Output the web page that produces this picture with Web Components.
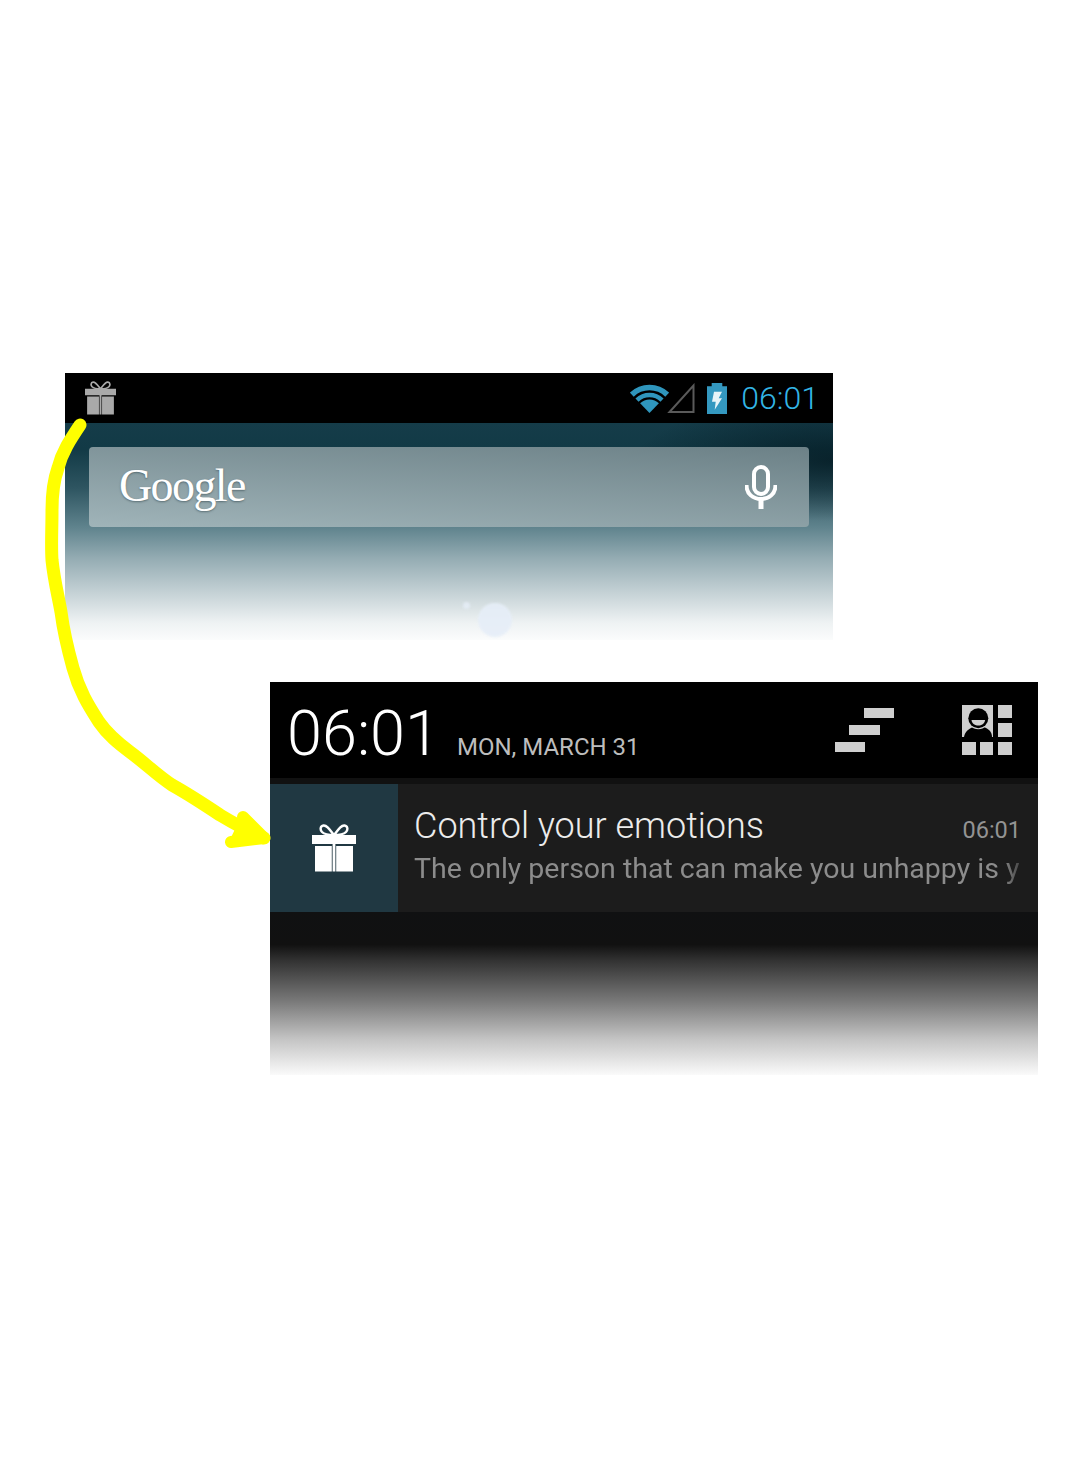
<!DOCTYPE html>
<html>
<head>
<meta charset="utf-8">
<title>Notification</title>
<style>
  html, body { margin: 0; background: #fff; }
  body { position: relative; width: 1080px; height: 1466px; overflow: hidden; font-family: Roboto, "Liberation Sans", sans-serif; }
</style>
</head>
<body>
<home-screen>
  <status-bar slot="bar" time="06:01"></status-bar>
  <search-box></search-box>
</home-screen>

<notification-shade time="06:01" date="MON, MARCH 31">
  <notification-row title="Control your emotions" time="06:01" text="The only person that can make you unhappy is y"></notification-row>
</notification-shade>

<hand-arrow></hand-arrow>

<script>
class GiftIcon extends HTMLElement {
  constructor () {
    super()
    this.shadow = this.attachShadow({ mode: 'open' })
  }

  connectedCallback () {
    const color = this.getAttribute('color') || '#fff'
    const width = this.getAttribute('width') || '44'
    const height = this.getAttribute('height') || '48'
    this.shadow.innerHTML = /* html */`
    <style>
      :host { display: block; line-height: 0; }
    </style>
    <svg width="${width}" height="${height}" viewBox="0 0 44 48">
      <path d="M0 11h44v9H0z M3 22h16.800v25.500H3z M24.200 22H41v25.500H24.200z M20.600 20h2.800v27.500h-2.800z" fill="${color}"/>
      <path d="M22 11C18 6 15 1 11.500 1.500 8 2 8 6 10 8 12 10 17 11 22 11Z M22 11C26 6 29 1 32.500 1.500 36 2 36 6 34 8 32 10 27 11 22 11Z" fill="none" stroke="${color}" stroke-width="2.400"/>
    </svg>
    `
  }
}

class StatusBar extends HTMLElement {
  constructor () {
    super()
    this.shadow = this.attachShadow({ mode: 'open' })
  }

  connectedCallback () {
    const time = this.getAttribute('time')
    this.shadow.innerHTML = /* html */`
    <style>
      :host {
        display: flex;
        align-items: center;
        height: 50px;
        background: #000;
        padding: 0 14px 0 20px;
      }
      .right { margin-left: auto; display: flex; align-items: center; }
      .right svg { display: block; }
      .signal { margin-left: -2px; }
      .battery { margin-left: 12px; }
      .time {
        margin-left: 14px;
        color: #33b5e5;
        font: 300 32px Roboto, sans-serif;
      }
    </style>
    <gift-icon color="#a9a9a9" width="31" height="34"></gift-icon>
    <div class="right">
      <svg width="39" height="30" viewBox="0 0 39 30" fill="none" stroke="#2f96bd">
        <path d="M1.800 11.700A25.500 25.500 0 0 1 37.200 11.700" stroke-width="5.500"/>
        <path d="M7 17.100A18 18 0 0 1 32 17.100" stroke-width="4.500"/>
        <path d="M19.500 30 10.100 20.300A13.500 13.500 0 0 1 28.900 20.300Z" fill="#2f96bd" stroke="none"/>
      </svg>
      <svg class="signal" width="28" height="30" viewBox="0 0 28 30">
        <path d="M26.500 2.500V29H2.500Z" fill="none" stroke="#5a5a5a" stroke-width="2"/>
      </svg>
      <svg class="battery" width="20" height="31" viewBox="0 0 20 31">
        <path d="M4.700 0h10.600v3.300H20V31H0V3.300h4.700z" fill="#3498c0"/>
        <path d="M7 8.700h8l-3.300 6.600H15L7.700 26.700l1-8H5z" fill="#e8f4f8"/>
      </svg>
      <div class="time">${time}</div>
    </div>
    `
  }
}

class SearchBox extends HTMLElement {
  constructor () {
    super()
    this.shadow = this.attachShadow({ mode: 'open' })
  }

  connectedCallback () {
    this.shadow.innerHTML = /* html */`
    <style>
      :host {
        display: flex;
        align-items: center;
        justify-content: space-between;
        height: 80px;
        margin: 24px 24px 0;
        padding: 0 32px 0 30px;
        border-radius: 4px;
        background: linear-gradient(184deg, #6c8187 0%, #a0b4b9 100%);
      }
      .logo {
        color: #fff;
        font: 46px "Liberation Serif", serif;
        letter-spacing: -1.600px;
        text-shadow: 0 1px 2px rgba(30, 50, 55, 0.5);
        margin-top: -4px;
      }
      svg { display: block; }
    </style>
    <div class="logo">Google</div>
    <svg width="32" height="44" viewBox="0 0 32 44">
      <rect x="9" y="2" width="14" height="27" rx="7" fill="none" stroke="#fff" stroke-width="4"/>
      <path d="M1.500 20C1.500 29 8 34 16 34S30.500 29 30.500 20" fill="none" stroke="#fff" stroke-width="4"/>
      <path d="M13.500 32h5v12h-5z" fill="#fff"/>
    </svg>
    `
  }
}

class HomeScreen extends HTMLElement {
  constructor () {
    super()
    this.shadow = this.attachShadow({ mode: 'open' })
  }

  connectedCallback () {
    this.shadow.innerHTML = /* html */`
    <style>
      :host {
        display: block;
        width: 768px;
        margin: 373px 0 0 65px;
      }
      .wall {
        position: relative;
        height: 217px;
        display: flow-root;
        background:
          radial-gradient(ellipse 200px 60px at 100% 38px, rgba(3, 24, 32, 0.75), rgba(3, 24, 32, 0)),
          linear-gradient(180deg, #153c49 0%, #123a46 12%, #2e5561 30%, #5f838d 48%, #93abb2 62%, #c4d1d5 78%, #eef2f3 92%, #fbfcfc 100%);
      }
      .glow {
        position: absolute;
        border-radius: 50%;
        background: #e6eef8;
        filter: blur(1px);
      }
      .big { left: 413px; top: 180px; width: 34px; height: 34px; opacity: 0.9; }
      .small { left: 398px; top: 179px; width: 7px; height: 7px; opacity: 0.8; }
    </style>
    <slot name="bar"></slot>
    <div class="wall">
      <slot></slot>
      <div class="glow big"></div>
      <div class="glow small"></div>
    </div>
    `
  }
}

class NotificationRow extends HTMLElement {
  constructor () {
    super()
    this.shadow = this.attachShadow({ mode: 'open' })
  }

  connectedCallback () {
    const title = this.getAttribute('title')
    const time = this.getAttribute('time')
    const text = this.getAttribute('text')
    this.shadow.innerHTML = /* html */`
    <style>
      :host {
        display: flex;
        height: 128px;
        background: #1c1c1c;
      }
      .icon {
        flex: none;
        width: 128px;
        display: flex;
        align-items: center;
        justify-content: center;
        background: #203842;
      }
      .body {
        flex: 1;
        min-width: 0;
        padding: 0 17px 0 16px;
        display: flex;
        flex-direction: column;
      }
      .top {
        display: flex;
        justify-content: space-between;
        align-items: baseline;
        margin-top: 19px;
      }
      .title { color: #ececec; font: 300 36px/46px Roboto, sans-serif; }
      .time { color: #939393; font: 400 23.500px Roboto, sans-serif; }
      .text {
        color: #8c8c8c;
        font: 400 28.500px/36px Roboto, sans-serif;
        white-space: nowrap;
        margin-top: 2px;
        -webkit-mask-image: linear-gradient(90deg, #000 97%, rgba(0, 0, 0, 0.35) 100%);
        mask-image: linear-gradient(90deg, #000 97%, rgba(0, 0, 0, 0.35) 100%);
      }
    </style>
    <div class="icon"><gift-icon></gift-icon></div>
    <div class="body">
      <div class="top">
        <div class="title">${title}</div>
        <div class="time">${time}</div>
      </div>
      <div class="text">${text}</div>
    </div>
    `
  }
}

class NotificationShade extends HTMLElement {
  constructor () {
    super()
    this.shadow = this.attachShadow({ mode: 'open' })
  }

  connectedCallback () {
    const time = this.getAttribute('time')
    const date = this.getAttribute('date')
    this.shadow.innerHTML = /* html */`
    <style>
      :host {
        display: block;
        width: 768px;
        margin: 42px 0 0 270px;
      }
      .head {
        display: flex;
        align-items: center;
        height: 96px;
        background: #000;
        padding: 0 26px 0 17px;
      }
      .clock {
        color: #fff;
        font: 300 63px Roboto, sans-serif;
        margin-top: 6px;
      }
      .date {
        color: #bdbdbd;
        font: 400 24px Roboto, sans-serif;
        margin: 34px 0 0 17px;
      }
      .tools { margin-left: auto; display: flex; align-items: center; gap: 68px; }
      .tools svg { display: block; }
      .sep { height: 6px; background: #111; }
      .fade {
        height: 163px;
        background: linear-gradient(180deg, #101112 0%, #111 20%, #333 30%, #777 54%, #c4c4c4 78%, #fafafa 100%);
      }
    </style>
    <div class="head">
      <div class="clock">${time}</div>
      <div class="date">${date}</div>
      <div class="tools">
        <svg width="59" height="44" viewBox="0 0 59 44" fill="#cfcfcf">
          <rect x="29" y="0" width="30" height="10"/>
          <rect x="14" y="17" width="31" height="10"/>
          <rect x="0" y="34" width="30" height="10"/>
        </svg>
        <svg width="50" height="50" viewBox="0 0 50 50" fill="#cfcfcf">
          <rect x="0" y="0" width="31" height="32"/>
          <path d="M2 32C3 26 7 24 11 22H22C26 24 30 26 30 32Z" fill="#000"/>
          <circle cx="16.300" cy="13.300" r="11" fill="#cfcfcf"/>
          <circle cx="16.300" cy="13.300" r="10" fill="#000"/>
          <path d="M9.500 15H23.100C22.500 19 19.500 20.500 16.300 20.500S10 19 9.500 15Z" fill="#cfcfcf"/>
          <rect x="36" y="0" width="14" height="13"/>
          <rect x="36" y="18" width="14" height="14"/>
          <rect x="0" y="37" width="14" height="13"/>
          <rect x="18" y="37" width="13" height="13"/>
          <rect x="36" y="37" width="14" height="13"/>
        </svg>
      </div>
    </div>
    <div class="sep"></div>
    <slot></slot>
    <div class="fade"></div>
    `
  }
}

// yellow marker stroke drawn over both panels
class HandArrow extends HTMLElement {
  constructor () {
    super()
    this.shadow = this.attachShadow({ mode: 'open' })
  }

  connectedCallback () {
    this.shadow.innerHTML = /* html */`
    <style>
      :host { position: absolute; left: 0; top: 0; pointer-events: none; }
      svg { display: block; }
    </style>
    <svg width="1080" height="1466" viewBox="0 0 1080 1466" fill="none" stroke="#ffff00" stroke-linecap="round" stroke-linejoin="round">
      <path stroke-width="13" d="M80 425C70 440 62 452 58 468 53 482 52 495 52 510 52 530 51 545 52 560 54 580 58 595 61 612 64 635 68 650 73 668 79 690 88 705 99 722 108 735 118 743 130 752 145 763 158 776 172 785 190 795 205 805 220 815 235 824 250 832 264 838"/>
      <path stroke-width="12" d="M243 817 264 838 231 842"/>
      <path d="M243 817 264 838 231 842Z" fill="#ffff00" stroke-width="4"/>
    </svg>
    `
  }
}

customElements.define('gift-icon', GiftIcon)
customElements.define('status-bar', StatusBar)
customElements.define('search-box', SearchBox)
customElements.define('home-screen', HomeScreen)
customElements.define('notification-row', NotificationRow)
customElements.define('notification-shade', NotificationShade)
customElements.define('hand-arrow', HandArrow)
</script>
</body>
</html>
